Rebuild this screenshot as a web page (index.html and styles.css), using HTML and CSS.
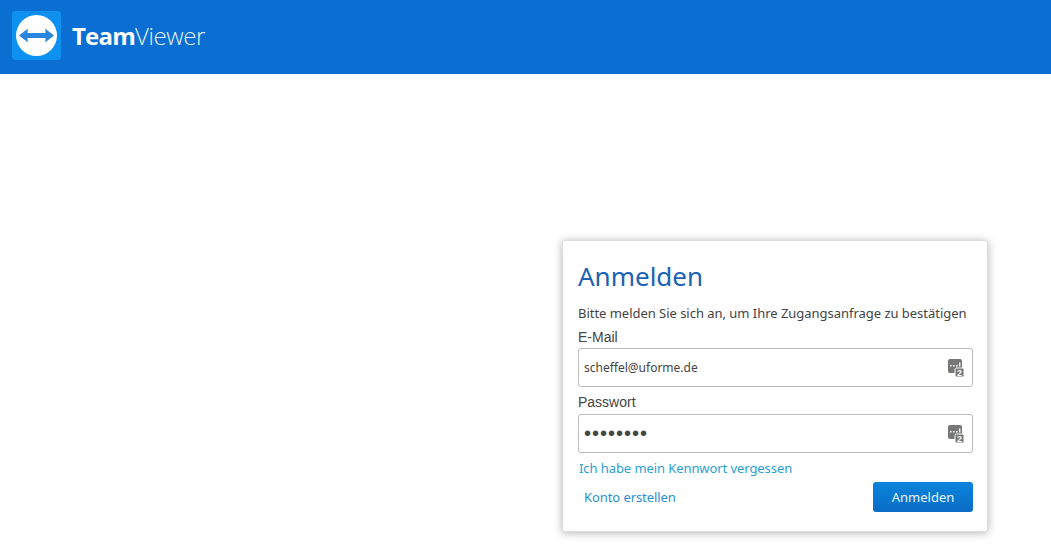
FILE: index.html
```html
<!DOCTYPE html>
<html lang="de">
<head>
<meta charset="UTF-8">
<meta name="viewport" content="width=device-width, initial-scale=1.0">
<title>TeamViewer - Anmelden</title>
<link rel="stylesheet" href="styles.css">
</head>
<body>
<header class="topbar">
  <div class="logo-box">
    <svg class="logo-icon" viewBox="0 0 41 41" width="41" height="41">
      <circle cx="20.5" cy="20.5" r="20.5" fill="#fff"/>
      <path d="M3 20.5 L12 13.5 Q11.2 16.3 11.6 18 H29.4 Q29.8 16.3 29 13.5 L38 20.5 L29 27.5 Q29.8 24.7 29.4 23 H11.6 Q11.2 24.7 12 27.5 Z" fill="#2b84de"/>
    </svg>
  </div>
  <div class="logo-text"><b>Team</b>Viewer</div>
</header>
<main class="page">
  <form class="card">
    <h1 class="title">Anmelden</h1>
    <p class="intro">Bitte melden Sie sich an, um Ihre Zugangsanfrage zu bestätigen</p>
    <label class="field-label">E-Mail</label>
    <div class="field">
      <span class="field-value">scheffel@uforme.de</span>
      <svg class="pw-icon" viewBox="0 0 16 18" width="16" height="18">
        <rect x="0" y="0" width="14" height="14" rx="2" fill="#777"/>
        <rect x="7" y="9" width="9" height="9" rx="1.5" fill="#777" stroke="#fff" stroke-width="1"/>
        <path d="M2 6h1.6v1.6H2zM5 6h1.6v1.6H5zM8 6h1.6v1.6H8zM11 3.5h1.4v4.1H11z" fill="#fff"/>
        <text x="11.5" y="17" class="pw-num">2</text>
      </svg>
    </div>
    <label class="field-label field-label-2">Passwort</label>
    <div class="field">
      <span class="field-dots">••••••••</span>
      <svg class="pw-icon" viewBox="0 0 16 18" width="16" height="18">
        <rect x="0" y="0" width="14" height="14" rx="2" fill="#777"/>
        <rect x="7" y="9" width="9" height="9" rx="1.5" fill="#777" stroke="#fff" stroke-width="1"/>
        <path d="M2 6h1.6v1.6H2zM5 6h1.6v1.6H5zM8 6h1.6v1.6H8zM11 3.5h1.4v4.1H11z" fill="#fff"/>
        <text x="11.5" y="17" class="pw-num">2</text>
      </svg>
    </div>
    <a class="link forgot" href="#">Ich habe mein Kennwort vergessen</a>
    <div class="actions">
      <a class="link create" href="#">Konto erstellen</a>
      <button class="btn" type="button">Anmelden</button>
    </div>
  </form>
</main>
</body>
</html>
```
FILE: styles.css
```css
body {
  margin: 0;
  background-color: white;
  font-family: "Noto Sans", "Open Sans", sans-serif;
}

.topbar {
  display: flex;
  align-items: center;
  height: 74px;
  padding-left: 12px;
  padding-bottom: 3px;
  box-sizing: border-box;
  background-color: #0a6ed3;
}

.logo-box {
  display: flex;
  align-items: center;
  justify-content: center;
  width: 49px;
  height: 49px;
  border-radius: 3px;
  background-color: #0e90f0;
}

.logo-text {
  margin-left: 11px;
  font-family: "Open Sans", sans-serif;
  font-size: 24px;
  font-weight: 300;
  letter-spacing: -0.4px;
  color: #e4f0fb;
}

.logo-text b {
  font-weight: 700;
  letter-spacing: -0.8px;
  color: #fff;
}

.page {
  display: flex;
  justify-content: flex-end;
  height: 486px;
  box-sizing: border-box;
  padding: 166px 63px 0 0;
}

.card {
  display: flex;
  flex-direction: column;
  width: 426px;
  height: 292px;
  box-sizing: border-box;
  padding: 0 14px 0 15px;
  background-color: #fff;
  border: 1px solid #ddd;
  border-radius: 3px;
  box-shadow: 0 1px 9px rgba(0, 0, 0, 0.3);
}

.title {
  margin: 17px 0 0;
  font-size: 26px;
  line-height: 36px;
  font-weight: 400;
  color: #1b62b5;
}

.intro {
  margin: 10px 0 0;
  font-size: 13px;
  line-height: 18px;
  letter-spacing: -0.03px;
  color: #444;
}

.field-label {
  margin-top: 7px;
  font-family: "Liberation Sans", Arial, sans-serif;
  font-size: 14px;
  line-height: 16px;
  color: #444;
}

.field-label-2 {
  padding-bottom: 1px;
}

.field {
  display: flex;
  align-items: center;
  justify-content: space-between;
  height: 39px;
  box-sizing: border-box;
  margin-top: 3px;
  padding: 0 8px 0 5px;
  border: 1px solid #bbb;
  border-radius: 3px;
}

.field-value {
  font-size: 12px;
  color: #444;
}

.field-dots {
  font-family: "Liberation Sans", Arial, sans-serif;
  font-size: 20px;
  letter-spacing: 1px;
  color: #444;
}

.pw-icon {
  flex-shrink: 0;
}

.pw-num {
  font-family: "Liberation Sans", Arial, sans-serif;
  font-size: 9px;
  font-weight: 700;
  fill: #fff;
  text-anchor: middle;
}

.link {
  font-size: 13px;
  letter-spacing: -0.08px;
  color: #2a9fd6;
  text-decoration: none;
}

.forgot {
  margin-top: 7px;
  margin-left: 1px;
  line-height: 17px;
}

.actions {
  display: flex;
  align-items: center;
  justify-content: space-between;
  margin-top: 5px;
  padding-left: 6px;
}

.create {
  color: #2a8fd0;
}

.btn {
  width: 100px;
  height: 30px;
  border: none;
  border-radius: 3px;
  background: linear-gradient(#0b84dd, #0a6cc4);
  color: #e8f4fc;
  font-family: inherit;
  font-size: 13px;
}
```
